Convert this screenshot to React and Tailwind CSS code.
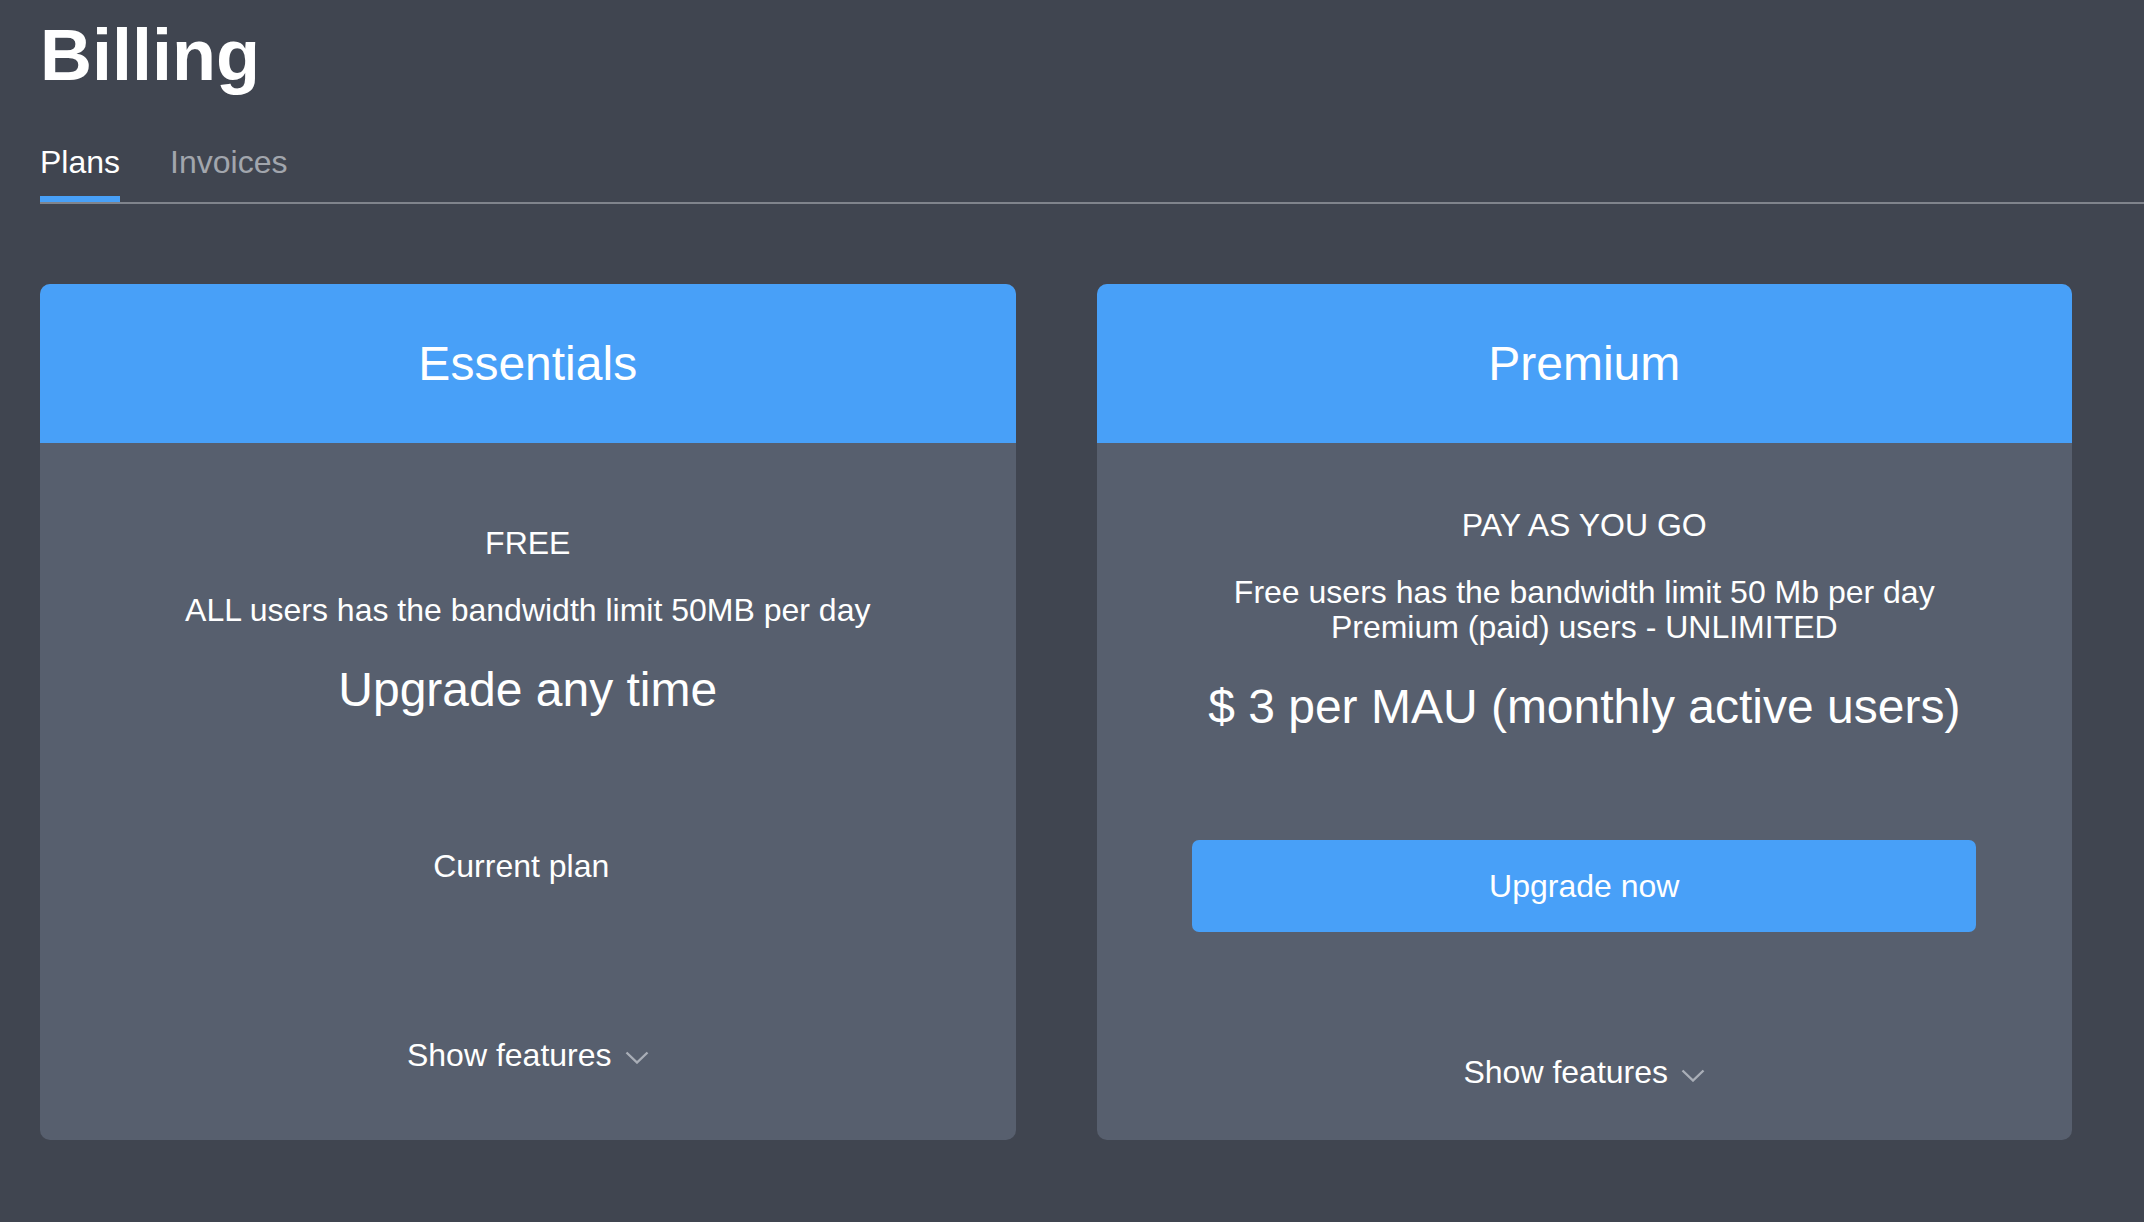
import React from "react";

function Chevron() {
  return (
    <svg width="24" height="13" viewBox="0 0 24 13" className="ml-[13px] mt-[6px]" fill="none">
      <polyline points="1.5,1.5 12,11.5 22.5,1.5" stroke="#a9aeb7" strokeWidth="2.4" />
    </svg>
  );
}

function ShowFeatures() {
  return (
    <div className="mt-[122px] flex items-center justify-center text-[32px] leading-[36px] text-white">
      <span>Show features</span>
      <Chevron />
    </div>
  );
}

function Card({ title, label, desc, big, action }) {
  return (
    <div className="flex flex-col overflow-hidden rounded-[10px] bg-[#575f6e]">
      <div className="flex h-[159px] items-center justify-center bg-[#48a0f8] text-[48px] leading-[56px] text-white">
        {title}
      </div>
      <div className="flex flex-1 flex-col justify-center pt-[64px] pb-[50px] text-center text-white">
        <div className="text-[32px] leading-[36px]">{label}</div>
        <div className="mt-[32px] text-[32px] leading-[35px]">
          {desc.map((d, i) => (
            <div key={i}>{d}</div>
          ))}
        </div>
        <div className="mt-[34px] text-[48px] leading-[56px]">{big}</div>
        <div className="mt-[105px] flex h-[92px] items-center justify-center">{action}</div>
        <ShowFeatures />
      </div>
    </div>
  );
}

export default function App() {
  return (
    <div
      className="min-h-[1222px] w-full bg-[#404550] pt-[15px] pl-[40px]"
      style={{ fontFamily: '"Liberation Sans", Arial, Helvetica, sans-serif' }}
    >
      <h1 className="text-[72px] font-bold leading-[80px] text-white">Billing</h1>

      <div className="mt-[49px] flex border-b-2 border-[#80848c]">
        <div className="flex flex-col">
          <span className="text-[32px] leading-[36px] text-white">Plans</span>
          <div className="mt-[16px] h-[6px] bg-[#48a0f8]" />
        </div>
        <div className="ml-[50px] flex flex-col">
          <span className="text-[32px] leading-[36px] text-[#a2a6ad]">Invoices</span>
          <div className="mt-[16px] h-[6px]" />
        </div>
      </div>

      <div className="mt-[80px] grid grid-cols-2 gap-[81px] pr-[72px]">
        <Card
          title="Essentials"
          label="FREE"
          desc={["ALL users has the bandwidth limit 50MB per day"]}
          big="Upgrade any time"
          action={<span className="pr-[13px] pb-[5px] text-[32px] leading-[36px]">Current plan</span>}
        />
        <Card
          title="Premium"
          label="PAY AS YOU GO"
          desc={[
            "Free users has the bandwidth limit 50 Mb per day",
            "Premium (paid) users - UNLIMITED",
          ]}
          big="$ 3 per MAU (monthly active users)"
          action={
            <button className="flex h-[92px] w-[784px] items-center justify-center rounded-[7px] bg-[#48a0f8] text-[32px] leading-[36px] text-white">
              Upgrade now
            </button>
          }
        />
      </div>
    </div>
  );
}
